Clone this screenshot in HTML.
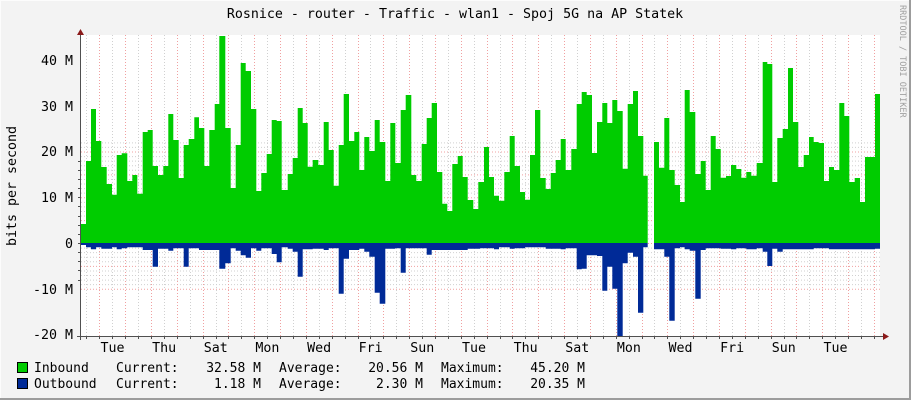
<!DOCTYPE html>
<html><head><meta charset="utf-8">
<style>
html,body{margin:0;padding:0;background:#f3f3f3;}
svg{display:block;}
text{font-family:"DejaVu Sans Mono","Liberation Mono",monospace;}
</style></head>
<body>
<svg id="g" width="911" height="400" xmlns="http://www.w3.org/2000/svg">
<rect x="0" y="0" width="911" height="400" fill="#f3f3f3"/>
<rect x="0" y="0" width="911" height="1" fill="#fcfcfc"/>
<rect x="0" y="0" width="1" height="400" fill="#fcfcfc"/>
<rect x="909" y="0" width="2" height="400" fill="#9c9c9c"/>
<rect x="0" y="398" width="911" height="2" fill="#9c9c9c"/>
<rect x="81" y="35" width="799" height="301" fill="#ffffff"/>
<g id="grid"></g>
<g id="data"></g>
<g id="axes"></g>
<text x="455" y="18" font-size="13.3" text-anchor="middle" fill="#000">Rosnice - router - Traffic - wlan1 - Spoj 5G na AP Statek</text>
<text transform="translate(16,186) rotate(-90)" font-size="13.3" text-anchor="middle" fill="#000">bits per second</text>
<text transform="translate(900,5) rotate(90)" font-size="8.5" fill="#a0a0a0">RRDTOOL / TOBI OETIKER</text>
<g font-size="13.3" fill="#000" text-anchor="end">
<text x="73" y="65">40 M</text>
<text x="73" y="111">30 M</text>
<text x="73" y="156">20 M</text>
<text x="73" y="202">10 M</text>
<text x="73" y="248">0</text>
<text x="73" y="294">-10 M</text>
<text x="73" y="339">-20 M</text>
</g>
<g id="xl" font-size="13.3" fill="#000" text-anchor="middle"></g>
<rect x="17.5" y="362.5" width="10" height="10" fill="#00cc00" stroke="#000" stroke-width="1"/>
<rect x="17.5" y="378.5" width="10" height="10" fill="#002a97" stroke="#000" stroke-width="1"/>
<g font-size="13" fill="#000">
<text x="34" y="372">Inbound</text>
<text x="116" y="372">Current:</text>
<text x="261" y="372" text-anchor="end">32.58 M</text>
<text x="279" y="372">Average:</text>
<text x="423" y="372" text-anchor="end">20.56 M</text>
<text x="441" y="372">Maximum:</text>
<text x="585" y="372" text-anchor="end">45.20 M</text>
<text x="34" y="388">Outbound</text>
<text x="116" y="388">Current:</text>
<text x="261" y="388" text-anchor="end">1.18 M</text>
<text x="279" y="388">Average:</text>
<text x="423" y="388" text-anchor="end">2.30 M</text>
<text x="441" y="388">Maximum:</text>
<text x="585" y="388" text-anchor="end">20.35 M</text>
</g>
</svg>
<script>
var NS="http://www.w3.org/2000/svg";
function el(p,t,a){var e=document.createElementNS(NS,t);for(var k in a)e.setAttribute(k,a[k]);p.appendChild(e);return e;}
var grid=document.getElementById('grid');
for(var i=-10;i<=22;i++){var y=243-i*4.575;if(y<35||y>336)continue;
 var major=(i%5==0);
 el(grid,'line',{x1:81,x2:880,y1:y+0.5,y2:y+0.5,stroke:major?'#f0a0a0':'#d0d0d0','stroke-dasharray':'1,2','stroke-width':1});}
for(var k=0;k<64;k++){var x=86.4+k*12.91;if(x>880)break;
 var major=(k%2==1);
 el(grid,'line',{x1:Math.round(x)+0.5,x2:Math.round(x)+0.5,y1:35,y2:336,stroke:major?'#f0a0a0':'#d0d0d0','stroke-dasharray':'1,2','stroke-width':1});}
var chunks=[
[80,[0,582,18,393,33,237,48,333,64,411,80,462,96,494,110,375,125,370,142,453,157,435,172,491,188,306,203,300,218,408,234,435,250,408,265,252,280,330,296,444,311,345,326,327,343,262,357,294,373,408,388,300,404,222,418,18,436,294,452,474,467,345,482,99,497,123,513,237,529,483,544,429,560,372,575,270,590,273],
[0,645,18,652,33,658,48,652,64,656,96,652,110,658,125,655,142,652,188,660,218,710,234,656,265,662,280,655,311,710,326,655,357,660,418,716,436,700,452,655,467,662,482,676,497,683,513,655,529,662,544,655,575,672,590,697]],
[280,[5,480,23,432,38,384,53,234,68,279,83,410,98,390,115,405,131,276,146,360,161,467,176,345,191,192,207,333,223,306,238,420,253,321,268,363,284,270,299,336,316,453,331,279,346,399,362,240,377,195,394,435,409,453,425,342,440,264,455,219,471,426,487,521,502,543,517,402,533,378,548,441,563,510,580,537,595,456],
[5,652,23,656,38,665,53,740,68,658,98,656,131,660,146,655,176,791,191,686,207,660,238,656,253,665,268,680,284,788,299,821,316,656,346,655,362,728,377,655,440,674,455,660,563,656]],
[480,[0,456,12,351,27,441,42,497,57,512,73,426,89,318,104,408,120,486,135,509,150,375,165,240,181,444,197,477,212,429,227,390,242,327,257,420,274,357,290,222,305,186,320,195,336,369,351,276,367,219,382,279,397,210,412,243,428,416,443,222,459,183,474,318,490,437,503,639,522,336,537,413,553,264,568,420,584,465],
[0,655,42,658,57,652,89,656,104,655,135,652,197,656,242,658,257,655,290,718,305,716,320,676,351,678,367,782,382,710,397,776,412,920,428,700,443,668,459,680,474,848,490,652,503,639,522,658,553,680,568,872,584,655]],
[680,[0,516,14,180,29,246,46,432,62,393,77,480,92,318,107,357,122,443,138,438,153,405,169,417,184,443,199,426,214,437,230,399,248,96,262,102,277,456,292,324,308,297,324,114,339,276,355,411,371,375,387,321,401,336,416,339,432,453,447,411,462,420,478,219,493,258,508,456,524,444,540,516,555,381,585,192],
[0,652,14,658,29,662,46,806,62,660,77,655,122,656,153,658,169,655,199,658,230,655,248,665,262,708,277,656,292,665,308,658,401,655,447,658,478,658,524,658,585,656]]
];
function steps(idx){var pts=[];for(var c=0;c<chunks.length;c++){var b=chunks[c][0],a=chunks[c][idx];
 for(var i=0;i<a.length;i+=2)pts.push([b+a[i]/3,30+a[i+1]/3]);}
 pts.sort(function(p,q){return p[0]-q[0];});
 var d='M81,243';var end=880;
 for(var i=0;i<pts.length;i++){var x0=Math.max(81,pts[i][0]),x1=(i+1<pts.length)?pts[i+1][0]:end;var y=Math.min(pts[i][1],336);
  d+=' L'+x0.toFixed(1)+','+y.toFixed(1)+' L'+x1.toFixed(1)+','+y.toFixed(1);}
 d+=' L880,243 Z';return d;}
var data=document.getElementById('data');
el(data,'path',{d:steps(1),fill:'#00cc00'});
el(data,'path',{d:steps(2),fill:'#002a97'});
var ax=document.getElementById('axes');
el(ax,'line',{x1:80.5,x2:80.5,y1:32,y2:340,stroke:'#505050','stroke-width':1});
el(ax,'line',{x1:77,x2:884,y1:336.5,y2:336.5,stroke:'#505050','stroke-width':1});
for(var i=-4;i<=9;i++){var y=Math.round(243-i*9.15)+0.5;el(ax,'line',{x1:78,x2:81,y1:y,y2:y,stroke:'#505050'});}
for(var k=0;k<64;k++){var x=86.4+k*12.91;if(x>880)break;x=Math.round(x)+0.5;el(ax,'line',{x1:x,x2:x,y1:336,y2:339,stroke:'#505050'});}
el(ax,'path',{d:'M77,35 L80.5,29 L84,35 Z',fill:'#8b1a1a'});
el(ax,'path',{d:'M883,333 L889,336.5 L883,340 Z',fill:'#8b1a1a'});
var days=['Tue','Thu','Sat','Mon','Wed','Fri','Sun','Tue','Thu','Sat','Mon','Wed','Fri','Sun','Tue'];
var xl=document.getElementById('xl');
for(var i=0;i<days.length;i++){var t=el(xl,'text',{x:(112.5+i*51.64).toFixed(1),y:352});t.textContent=days[i];}
</script>
</body></html>
